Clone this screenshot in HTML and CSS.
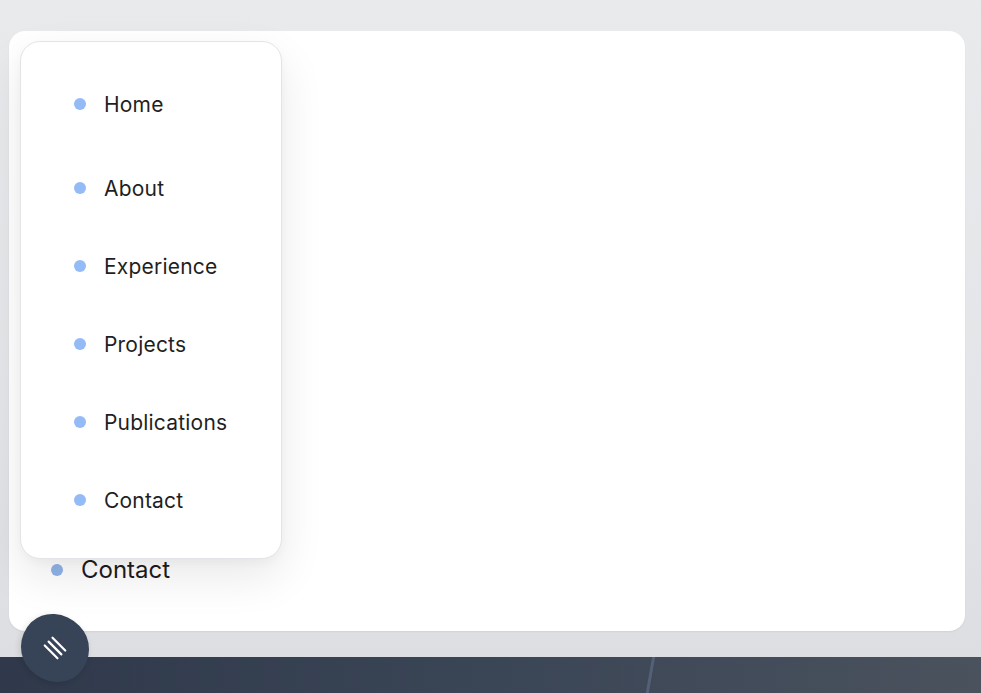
FILE: index.html
```html
<!DOCTYPE html>
<html lang="en">
<head>
<meta charset="utf-8">
<title>Menu</title>
<link rel="stylesheet" href="styles.css">
</head>
<body>
<div class="page">
  <main class="panel">
    <ul class="under-nav">
      <li class="under-item"><span class="dot dim"></span>Contact</li>
    </ul>
  </main>
  <footer class="footer"></footer>
</div>

<nav class="menu-card">
  <ul class="menu-list">
    <li class="menu-item first"><span class="dot"></span>Home</li>
    <li class="menu-item"><span class="dot"></span>About</li>
    <li class="menu-item"><span class="dot"></span>Experience</li>
    <li class="menu-item"><span class="dot"></span>Projects</li>
    <li class="menu-item"><span class="dot"></span>Publications</li>
    <li class="menu-item"><span class="dot"></span>Contact</li>
  </ul>
</nav>

<button class="fab" aria-label="Menu">
  <svg class="fab-icon" width="30" height="30" viewBox="0 0 30 30">
    <g transform="rotate(45 15 15)" stroke="#ffffff" stroke-width="2.2" stroke-linecap="round">
      <line x1="6" y1="9.5" x2="24" y2="9.5"/>
      <line x1="6" y1="15" x2="24" y2="15"/>
      <line x1="6" y1="20.5" x2="24" y2="20.5"/>
    </g>
  </svg>
</button>
</body>
</html>
```

FILE: styles.css
```css
* { box-sizing: border-box; }

html, body {
  margin: 0;
  height: 100%;
}

body {
  font-family: Inter, "Noto Sans", sans-serif;
  background: linear-gradient(180deg, #e9eaec 0%, #e4e5e8 60%, #dcdde0 100%);
  overflow: hidden;
}

.page {
  height: 693px;
  display: flex;
  flex-direction: column;
}

.panel {
  margin: 31px 16px 0 9px;
  height: 600px;
  background: #ffffff;
  border-radius: 16px;
  box-shadow: 0 1px 2px rgba(0, 0, 0, 0.06);
  display: flex;
  flex-direction: column;
  justify-content: flex-end;
  padding: 0 0 46px 42px;
}

.under-nav {
  list-style: none;
  margin: 0;
  padding: 0;
}

.under-item {
  display: flex;
  align-items: center;
  gap: 18px;
  font-size: 24px;
  line-height: 30px;
  color: #1c1c20;
}

.footer {
  margin-top: auto;
  height: 36px;
  background:
    linear-gradient(100deg, transparent 0 66%, rgba(120, 140, 180, 0.35) 66.1% 66.3%, transparent 66.4% 100%),
    linear-gradient(90deg, #2f394b 0%, #3a4556 50%, #4a525d 100%);
}

.dot {
  width: 12px;
  height: 12px;
  border-radius: 50%;
  background: #94bbf6;
  flex: none;
}

.dot.dim {
  background: #8fb3e8;
}

.menu-card {
  position: absolute;
  left: 20px;
  top: 41px;
  width: 262px;
  height: 518px;
  background: #ffffff;
  border: 1px solid #e3e4e7;
  border-radius: 20px;
  box-shadow: 0 18px 45px rgba(0, 0, 0, 0.09), 0 4px 10px rgba(0, 0, 0, 0.03);
  padding: 23px 0 0 53px;
}

.menu-list {
  list-style: none;
  margin: 0;
  padding: 0;
}

.menu-item {
  height: 78px;
  display: flex;
  align-items: center;
  gap: 18px;
  font-size: 21px;
  font-weight: 400;
  letter-spacing: 0.2px;
  color: #1f1f23;
}

.menu-item.first {
  margin-bottom: 6px;
}

.fab {
  position: absolute;
  left: 20px;
  top: 615px;
  width: 70px;
  height: 66px;
  border: none;
  padding: 0;
  background: #374357;
  border-radius: 52% 48% 52% 48% / 48% 52% 48% 52%;
  transform: rotate(45deg);
  box-shadow: 0 2px 6px rgba(0, 0, 0, 0.12);
  display: flex;
  align-items: center;
  justify-content: center;
}

.fab-icon {
  transform: rotate(-45deg);
}
```
